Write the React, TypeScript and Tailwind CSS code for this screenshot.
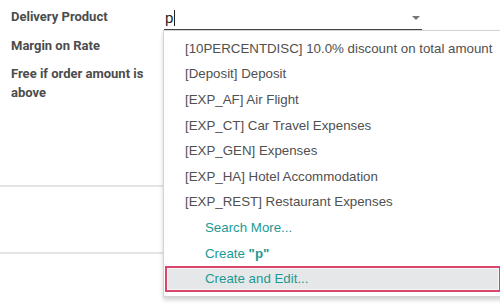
import React from "react";

const items = [
  "[10PERCENTDISC] 10.0% discount on total amount",
  "[Deposit] Deposit",
  "[EXP_AF] Air Flight",
  "[EXP_CT] Car Travel Expenses",
  "[EXP_GEN] Expenses",
  "[EXP_HA] Hotel Accommodation",
  "[EXP_REST] Restaurant Expenses",
];

export default function App() {
  return (
    <div className="relative w-[500px] h-[304px] bg-white overflow-hidden text-[#4c4c4c]">
      {/* form */}
      <div className="flex flex-col pt-[7px]" style={{ fontFamily: "Roboto, 'Liberation Sans', sans-serif" }}>
        <div className="flex h-[28px]">
          <div className="w-[164px] pl-[11px] pt-[1px] text-[13px] font-bold leading-[18px]">Delivery Product</div>
          <div className="relative w-[258px] h-[23px] border-b border-[#444] flex items-center">
            <span className="text-[15px] text-[#222] leading-[18px] pl-[1px]">p</span>
            <span className="ml-[1px] w-px h-[16px] bg-[#222]" />
            <span className="absolute right-[2px] top-[9px] w-0 h-0 border-l-[4px] border-r-[4px] border-t-[4px] border-l-transparent border-r-transparent border-t-[#777]" />
          </div>
        </div>
        <div className="flex h-[28px]">
          <div className="w-[164px] pl-[11px] pt-[2px] text-[13px] font-bold leading-[18px]">Margin on Rate</div>
        </div>
        <div className="flex h-[122px]">
          <div className="w-[163px] pl-[11px] pt-[1px] text-[13px] font-bold leading-[19px]">
            Free if order amount is
            <br />
            above
          </div>
          <div className="w-px h-[15px] mt-[1px] bg-[#999]" />
        </div>
        <div className="h-[2px] bg-[#e4e4e4]" />
        <div className="h-[65px]" />
        <div className="h-[2px] bg-[#e4e4e4]" />
      </div>

      {/* dropdown */}
      <div
        className="absolute left-[163px] top-[30px] w-[345px] h-[267px] bg-white border border-[#d4d4d4] shadow-[0_3px_4px_rgba(0,0,0,0.18)] pt-[5px]"
        style={{ fontFamily: "'Liberation Sans', Arial, sans-serif" }}
      >
        {items.map((t) => (
          <div key={t} className="h-[25.6px] flex items-center pl-[21px] text-[13.3px] text-[#505050] whitespace-nowrap">
            {t}
          </div>
        ))}
        <div className="h-[25.6px] flex items-center pl-[41px] text-[13.3px] text-[#1b9a94]">Search More...</div>
        <div className="h-[25.6px] flex items-center pl-[41px] text-[13.3px] text-[#1b9a94]">
          Create&nbsp;<b>"p"</b>
        </div>
        <div className="h-[26px] mt-[-0.5px] flex items-center pl-[38px] text-[13.3px] text-[#1b9a94] bg-[#e6e7e9] border-2 border-[#d9466b] shadow-[inset_0_0_0_1px_#f5f5f5] ml-[1px] w-[336px]">
          Create and Edit...
        </div>
      </div>
    </div>
  );
}
